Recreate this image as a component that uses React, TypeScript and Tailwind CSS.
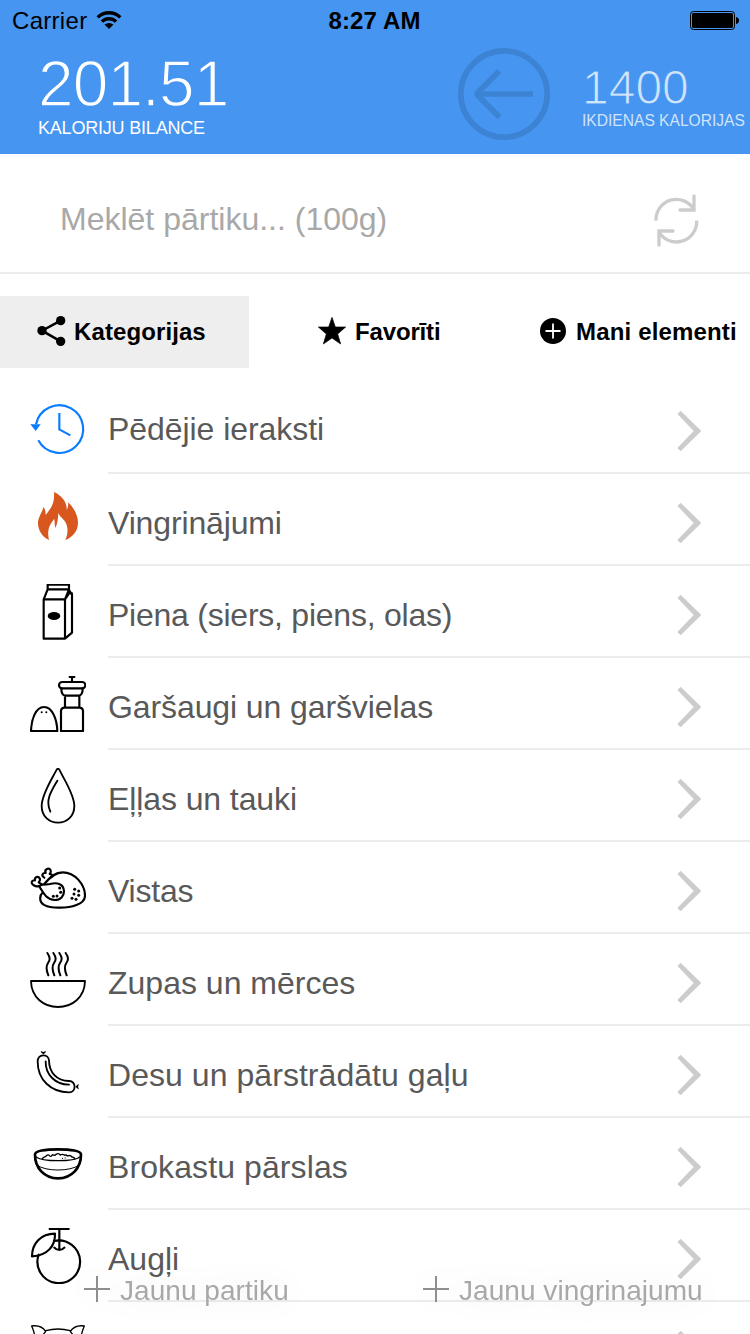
import type { ReactNode } from "react";

function Icon({ y, x = 90, children }: { y: number; x?: number; children: ReactNode }) {
  return (
    <svg
      className="h-14 w-14 shrink-0"
      viewBox={`${x} ${y} 168 168`}
      fill="none"
      stroke="#000"
      strokeWidth="6.500"
      strokeLinecap="round"
      strokeLinejoin="round"
    >
      {children}
    </svg>
  );
}

const ClockIcon = (
  <Icon y={60}>
    <g stroke="#0a7cff" strokeLinecap="butt" strokeLinejoin="miter">
      <path d="M108 133A71.500 71.500 0 1 1 115 181" />
      <path d="M178 99v49l33 18" />
      <path d="M91 133h31l-15 20z" fill="#0a7cff" stroke="none" />
    </g>
  </Icon>
);

const FlameIcon = (
  <Icon y={336}>
    <path
      stroke="none"
      fill="#d8571f"
      d="M162 336C184 346 202 366 200 390C204 384 205 376 205 367C222 384 234 406 234 428C234 455 216 472 196 480C205 458 204 444 198 430C192 416 180 412 175 399C174 415 173 431 166 444C164 434 164 425 163 416C152 430 139 447 147 480C128 472 114 452 114 430C114 410 127 399 130 381C135 387 137 393 137 405C152 386 165 370 162 336Z"
    />
  </Icon>
);

const MilkIcon = (
  <Icon y={72}>
    <path d="M131 118h64v118h-64zM131 118l12-30h64l-12 30M143 88V74h64v14M207 90l9 14v114l-21 18M195 118l12-18 9 0" />
    <ellipse cx="162" cy="168" rx="19" ry="12" fill="#000" stroke="none" />
  </Icon>
);

const SpicesIcon = (
  <Icon y={348}>
    <path d="M93 513C94 480 106 441 132 441C158 441 171 480 172 513Z" />
    <circle cx="125" cy="457" r="3" fill="#000" stroke="none" />
    <circle cx="139" cy="457" r="3" fill="#000" stroke="none" />
    <path d="M209 351h14M216 352v12" />
    <rect x="177" y="366" width="79" height="19" rx="9.500" />
    <path d="M184 386c0 12 4 20 12 21h40c8-1 12-9 12-21M195 408v33M238 408v33M192 443h48q8 1 9 9v61h-66v-61q1-8 9-9" />
  </Icon>
);

const DropIcon = (
  <Icon y={54}>
    <path
      strokeWidth="5.500"
      d="M170 59C154 90 125 134 125 168C125 199 147 218 174 218C201 218 223 199 223 168C223 134 193 90 178 59Q174 53 170 59ZM172 92C153 124 135 151 151 185"
    />
  </Icon>
);

const ChickenIcon = (
  <Icon y={330}>
    <path d="M121 407C106 413 91 402 96 394Q99 390 105 391C103 380 115 377 119 385Q122 390 116 397L126 404" />
    <path d="M133 383C123 377 127 368 137 369C132 357 147 352 152 361Q154 366 149 372Q157 371 155 380" />
    <path d="M117 408C130 428 139 449 164 450C182 450 192 438 192 424C191 399 169 397 150 402C140 404 132 404 124 404" />
    <path d="M133 402C151 380 166 367 188 367C225 367 255 404 255 437C255 463 213 474 175 473C139 473 118 463 121 443Q121 434 127 429" />
    <g fill="#000" stroke="none">
      <circle cx="179" cy="414" r="4.500" /><circle cx="182" cy="427" r="4.500" />
      <circle cx="171" cy="438" r="4.500" /><circle cx="160" cy="439" r="4.500" />
      <circle cx="224" cy="418" r="4.500" /><circle cx="236" cy="423" r="4.500" />
      <circle cx="222" cy="432" r="4.500" /><circle cx="236" cy="436" r="4.500" />
      <circle cx="216" cy="445" r="4.500" /><circle cx="228" cy="448" r="4.500" />
    </g>
  </Icon>
);

const SoupIcon = (
  <Icon y={66}>
    <path
      strokeWidth="5.500"
      d="M93 153h162C254 203 216 231 174 231S94 203 93 153Z"
    />
    <path
      strokeWidth="6"
      d="M142 69C152 83 150 90 144 99S137 117 145 136M160 69C170 83 168 90 162 99S155 117 163 136M178 69C188 83 186 90 180 99S173 117 181 136M197 69C207 83 205 90 199 99S192 117 200 136"
    />
  </Icon>
);

const SausageIcon = (
  <Icon y={342}>
    <path
      strokeWidth="5.500"
      d="M113 395C113 370 145 371 147 391C147 427 170 453 207 453C230 453 229 487 207 487C153 487 113 449 113 395ZM137 394C136 435 166 463 207 464"
    />
    <path fill="#000" stroke="none" d="M122 363l8 3 8-3-2 5-6 5-6-5zM237 462l-3 8 3 8-6-3-4-5 4-5z" />
  </Icon>
);

const CerealIcon = (
  <Icon y={48}>
    <path
      strokeWidth="8"
      d="M105 104C104 92 137 88 174 88S244 92 243 104C243 143 216 175 174 175S105 143 105 104Z"
    />
    <path strokeWidth="4" d="M107 110C127 126 221 126 241 110" />
    <path strokeWidth="3" d="M112 136C137 155 211 155 236 136" />
    <path
      strokeWidth="4"
      d="M127 117C129 109 137 112 139 107Q146 102 149 108Q155 111 157 104Q165 108 168 103Q176 98 181 105Q188 101 194 106Q198 103 202 108Q211 104 216 111Q223 111 224 117"
    />
    <path strokeWidth="3" d="M187 115h1M195 114h1" />
  </Icon>
);

const FruitIcon = (
  <Icon y={324}>
    <path d="M149 327h57M178 328v61M163 383c5 6 10 7 15 7s10-1 15-7" />
    <path d="M162 363A64 64 0 1 1 116 404M164 363Q178 359 192 363" />
    <path d="M96 409C96 371 122 341 165 341C166 376 144 407 96 409Z" />
  </Icon>
);

const PigIcon = (
  <Icon y={600}>
    <path
      strokeWidth="4"
      d="M137 635Q125 614 95 618Q101 631 105 650M211 635Q223 614 253 618Q247 631 243 650M137 632Q174 622 211 632M124 650L137 635M224 650L211 635"
    />
  </Icon>
);

const rows: { label: string; icon: ReactNode; text: string }[] = [
  { label: "Pēdējie ieraksti", icon: ClockIcon, text: "pt-1 tracking-[-0.06px]" },
  { label: "Vingrinājumi", icon: FlameIcon, text: "pt-2 tracking-[-0.14px]" },
  { label: "Piena (siers, piens, olas)", icon: MilkIcon, text: "pt-2 tracking-[-0.24px]" },
  { label: "Garšaugi un garšvielas", icon: SpicesIcon, text: "pt-2 tracking-[-0.1px]" },
  { label: "Eļļas un tauki", icon: DropIcon, text: "pt-2 tracking-[-0.1px]" },
  { label: "Vistas", icon: ChickenIcon, text: "pt-2 tracking-[-0.2px]" },
  { label: "Zupas un mērces", icon: SoupIcon, text: "pt-2" },
  { label: "Desu un pārstrādātu gaļu", icon: SausageIcon, text: "pt-2 tracking-[0.05px]" },
  { label: "Brokastu pārslas", icon: CerealIcon, text: "pt-2 tracking-[0.1px]" },
  { label: "Augļi", icon: FruitIcon, text: "pt-2" },
  { label: "", icon: PigIcon, text: "pt-2" },
];

function Header() {
  return (
    <header className="h-[154px] bg-[#4595f1]">
      <div className="grid h-10 grid-cols-[1fr_auto_1fr] pt-px text-2xl leading-10 text-black">
        <div className="flex items-start pl-3">
          <span className="tracking-[0.3px]">Carrier</span>
          <svg className="mt-[9px] ml-[9px] h-5 w-[26px]" viewBox="0 0 26 20" fill="none" stroke="#000" strokeWidth="3.400">
            <path d="M1.700 7.400A16 16 0 0 1 24.300 7.400M5.900 11.600A10.100 10.100 0 0 1 20.100 11.600" />
            <path d="M13 19L8.500 14.500Q13 11.300 17.500 14.500Z" fill="#000" stroke="none" />
          </svg>
        </div>
        <span className="mr-px font-bold tracking-[0.15px]">8:27 AM</span>
        <div className="flex justify-end pt-[10px] pr-[11px]">
          <svg className="h-[19px] w-[49px]" viewBox="0 0 49 19">
            <rect x=".5" y=".5" width="44" height="18" rx="3" fill="none" stroke="#000" />
            <rect x="2" y="2" width="41" height="15" rx="1.500" />
            <path d="M46 6q3 .5 3 3.500t-3 3.500z" />
          </svg>
        </div>
      </div>
      <div className="flex text-white">
        <div className="w-[420px] pt-3 pl-[38px]">
          <div className="text-[64px] leading-[64px] tracking-[-0.9px] [-webkit-text-stroke:1.500px_#4595f1]">201.51</div>
          <div className="mt-0.5 text-lg leading-5 tracking-[-0.2px]">KALORIJU BILANCE</div>
        </div>
        <svg className="mt-2 ml-[38px] h-[92px] w-[92px]" viewBox="0 0 276 276" fill="none" stroke="#3c83d4" strokeWidth="17">
          <circle cx="138" cy="138" r="129.500" />
          <path d="M225 138H56M124 69L61 132Q55 138 61 144L124 207" />
        </svg>
        <div className="flex-1 pt-6 pl-8 text-[#d0e4fb]">
          <div className="text-[48px] leading-[48px] [-webkit-text-stroke:1.100px_#4595f1]">1400</div>
          <div className="text-[15.600px] leading-[18px] whitespace-nowrap">IKDIENAS KALORIJAS</div>
        </div>
      </div>
    </header>
  );
}

function Search() {
  return (
    <div className="flex h-[120px] items-center justify-between border-b-2 border-[#ececec] pt-3 pr-[50px] pl-[60px]">
      <span className="text-[32px] leading-9 text-[#a8a8a8]">Meklēt pārtiku... (100g)</span>
      <svg className="mt-[3px] h-[54px] w-[46px]" viewBox="836 115 138 162" fill="none" stroke="#ccc" strokeWidth="10">
        <path d="M842 195A61 61 0 0 1 956 162M964 195A61 61 0 0 1 850 228" />
        <path d="M956 121v42h-42M851 268v-42h42" strokeLinecap="round" />
      </svg>
    </div>
  );
}

function Tabs() {
  return (
    <nav className="mt-[22px] flex h-[72px] items-center text-2xl leading-[70px] font-bold text-black">
      <div className="flex h-full w-[249px] items-center bg-[#eee] pl-[37px]">
        <svg className="-mt-0.5 mr-2 h-[30px] w-[29px]" viewBox="110 483 87 90" stroke="#000" strokeWidth="7.500">
          <path d="M181 497L125 527L181 559" fill="none" />
          <circle cx="181" cy="497" r="14" stroke="none" />
          <circle cx="125" cy="527" r="14" stroke="none" />
          <circle cx="181" cy="559" r="14" stroke="none" />
        </svg>
        <span className="tracking-[0.1px]">Kategorijas</span>
      </div>
      <div className="flex w-[222px] items-center pl-[69px]">
        <svg className="-mt-0.5 mr-[9px] h-7 w-7" viewBox="954 487 84 84">
          <path d="M996 488L1006 517H1037L1013 538L1022 568L996 550L970 568L979 538L955 517H986Z" stroke="#000" strokeWidth="2" strokeLinejoin="round" />
        </svg>
        <span className="tracking-[-0.15px]">Favorīti</span>
      </div>
      <div className="flex items-center pl-[69px] whitespace-nowrap">
        <svg className="-mt-0.5 mr-2.5 h-[26px] w-[26px]" viewBox="0 0 26 26">
          <circle cx="13" cy="13" r="13" />
          <path d="M13 5.500v15M5.500 13h15" stroke="#fff" strokeWidth="1.800" />
        </svg>
        <span className="tracking-[0.16px]">Mani elementi</span>
      </div>
    </nav>
  );
}

function PlusAction({ label }: { label: string }) {
  return (
    <div className="flex items-start [filter:drop-shadow(0_0_14px_rgba(0,0,0,0.08))]">
      <svg className="mr-[10px] h-[26px] w-[26px]" viewBox="0 0 26 26" stroke="#8e8e8e" strokeWidth="2">
        <path d="M13 0v26M0 13h26" />
      </svg>
      <span className="-mt-px text-[28px] leading-8 tracking-[0.05px] whitespace-nowrap text-[#a8a8a8]">{label}</span>
    </div>
  );
}

export default function App() {
  return (
    <div className="relative h-[1334px] w-[750px] overflow-hidden bg-white font-['Liberation_Sans',sans-serif]">
      <Header />
      <Search />
      <Tabs />
      <ul className="mt-[14px]">
        {rows.map((row, i) => (
          <li key={i} className="flex h-[92px] pl-[30px]">
            <div className="mt-[18px]">{row.icon}</div>
            <div className="ml-[22px] flex flex-1 items-center border-b-2 border-[#ececec] pr-[47px]">
              <span className={`flex-1 text-[32px] leading-9 text-[#595959] ${row.text}`}>{row.label}</span>
              <svg className="mt-[7px] h-[42px] w-[26px]" viewBox="231 89 78 126" fill="#ccc" stroke="#ccc" strokeWidth="4" strokeLinejoin="round">
                <path d="M235 101L242 94L301 152L242 210L235 203L284 152Z" />
              </svg>
            </div>
          </li>
        ))}
      </ul>
      <div className="absolute top-[1276px] left-[84px]">
        <PlusAction label="Jaunu partiku" />
      </div>
      <div className="absolute top-[1276px] left-[423px]">
        <PlusAction label="Jaunu vingrinajumu" />
      </div>
    </div>
  );
}
